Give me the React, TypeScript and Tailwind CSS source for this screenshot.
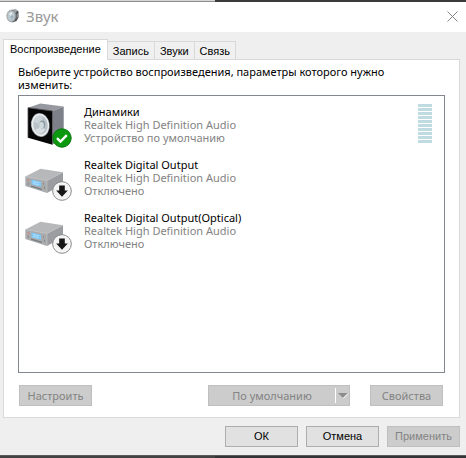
import React, { useState } from 'react';

interface Device {
    name: string;
    driver: string;
    status: string;
    kind: 'speaker' | 'digital';
    active: boolean;
}

const devices: Device[] = [
    { name: 'Динамики', driver: 'Realtek High Definition Audio', status: 'Устройство по умолчанию', kind: 'speaker', active: true },
    { name: 'Realtek Digital Output', driver: 'Realtek High Definition Audio', status: 'Отключено', kind: 'digital', active: false },
    { name: 'Realtek Digital Output(Optical)', driver: 'Realtek High Definition Audio', status: 'Отключено', kind: 'digital', active: false },
];

const tabs = ['Воспроизведение', 'Запись', 'Звуки', 'Связь'];

const SoundIcon: React.FC<React.SVGProps<SVGSVGElement>> = (props) => (
    <svg xmlns="http://www.w3.org/2000/svg" viewBox="0 0 14 14" {...props}>
        <path d="M5 1 10 .5 12.5 2.5v6l-2 3.5-4 1.5z" fill="#4a4d50" />
        <path d="M7 1 10 .5l1.5 1.5L9.5 4z" fill="#a3a8ac" />
        <path d="M10.5 5l1.5-1v4l-1.5 2z" fill="#85898c" />
        <ellipse cx="5.3" cy="7" rx="4.6" ry="6" fill="#a9b1b6" stroke="#85898c" strokeWidth=".8" strokeDasharray="1 1" />
        <ellipse cx="5.1" cy="7" rx="3.4" ry="4.6" fill="#bccad2" />
        <path d="M3 4.5 6.5 3 5 7.5z" fill="#e6edf0" />
        <ellipse cx="6" cy="8" rx="1.4" ry="1.8" fill="#9fb0bb" />
    </svg>
);

const CloseIcon: React.FC<React.SVGProps<SVGSVGElement>> = (props) => (
    <svg xmlns="http://www.w3.org/2000/svg" fill="none" viewBox="0 0 11 11" stroke="currentColor" {...props}>
        <path d="M.5.5l10 10M10.5.5l-10 10" />
    </svg>
);

const SpeakerIcon: React.FC<React.SVGProps<SVGSVGElement>> = (props) => (
    <svg xmlns="http://www.w3.org/2000/svg" viewBox="0 0 48 48" {...props}>
        <path d="M4 7.7 16.3 3.5 39.7 6.5 28.5 11z" fill="#96989f" />
        <path d="M28.5 11 39.7 6.5V35l-11.2 9.7z" fill="#7d8089" />
        <path d="M4 7.7 28.5 11v33.7L4 37.7z" fill="#060607" />
        <path d="M4 37.7V7.7L28.5 11" fill="none" stroke="#4b4d52" strokeWidth=".8" />
        <ellipse cx="16.3" cy="25" rx="9.4" ry="12" transform="rotate(-8 16.3 25)" fill="#8a9094" />
        <ellipse cx="16.3" cy="25" rx="8.8" ry="11.3" transform="rotate(-8 16.3 25)" fill="#eceff0" />
        <ellipse cx="16.5" cy="25" rx="7.2" ry="9.6" transform="rotate(-8 16.5 25)" fill="#b9c3c9" />
        <path d="M10 22c1-5 5-8 8.5-5.5L17.5 25z" fill="#ccd4d9" />
        <path d="M11 30c2 4.5 7 5 10-.5L18 26z" fill="#d8dee1" />
        <ellipse cx="18.3" cy="24.5" rx="3" ry="4" fill="#8d9aa3" />
        <ellipse cx="17.5" cy="25.3" rx="2.4" ry="3.2" fill="#cfd8dd" />
    </svg>
);

const DigitalIcon: React.FC<React.SVGProps<SVGSVGElement>> = (props) => (
    <svg xmlns="http://www.w3.org/2000/svg" viewBox="0 0 48 48" {...props}>
        <path d="M1.3 23.5 16.5 15.8 39 19.2 23 27.5z" fill="#b6b8ba" />
        <path d="M23 27.5 39 19.2V31L23 40z" fill="#9b9da0" />
        <path d="M1.3 23.5 23 27.5V40L1.3 33z" fill="#a9abad" />
        <path d="M1.3 23.5 23 27.5l16-8.3M23 27.5V40" fill="none" stroke="#bfc1c3" strokeWidth=".7" />
        <path d="M7.5 26.5 17 28.7v5L7.5 31.5z" fill="#7fc8f5" />
        <path d="M9 28.5l6 1.5M9 30.5l6 1.5" stroke="#b4e1fb" strokeWidth=".9" />
        <path d="M7 32.5l11 3.2V37L7 33.8z" fill="#77797b" />
        <circle cx="4.3" cy="27" r="1.1" fill="#cf8b8b" />
        <path d="M4.3 29.5V32M19.5 30v1.5M20.5 33.5V36" stroke="#85878a" strokeWidth="1" />
    </svg>
);

const CheckBadge: React.FC<React.SVGProps<SVGSVGElement>> = (props) => (
    <svg xmlns="http://www.w3.org/2000/svg" viewBox="0 0 20 20" {...props}>
        <circle cx="10" cy="10" r="9.2" fill="#0c990f" stroke="#0a780e" strokeWidth="1" />
        <path d="M5 10.2l3.5 3.4 6.3-6.4" fill="none" stroke="#fff" strokeWidth="2.4" />
    </svg>
);

const DownBadge: React.FC<React.SVGProps<SVGSVGElement>> = (props) => (
    <svg xmlns="http://www.w3.org/2000/svg" viewBox="0 0 20 20" {...props}>
        <circle cx="10" cy="10" r="9.3" fill="#fff" stroke="#858585" strokeWidth="1" />
        <circle cx="10" cy="10" r="8" fill="#f3f3f3" />
        <path d="M7.2 4.5h5.6v5h3L10 15.8 4.2 9.5h3z" fill="#161616" />
    </svg>
);

const LevelMeter = () => (
    <div className="flex w-3.5 flex-col gap-px pt-1">
        {Array.from({ length: 10 }, (_, i) => (
            <span key={i} className="h-[3px] bg-[#c0dce2]" />
        ))}
    </div>
);

const DeviceRow: React.FC<{ device: Device }> = ({ device }) => (
    <li className="flex h-[53px] items-start">
        <div className="relative size-12 shrink-0">
            {device.kind === 'speaker' ? <SpeakerIcon className="size-12" /> : <DigitalIcon className="size-12" />}
            {device.active ? (
                <CheckBadge className="absolute right-0 bottom-0 size-5" />
            ) : (
                <DownBadge className="absolute right-0 bottom-0 size-5" />
            )}
        </div>
        <div className="ml-3 flex-1 pt-[5px] leading-[13px] whitespace-nowrap text-[#838383]">
            <p className="text-black">{device.name}</p>
            <p>{device.driver}</p>
            <p>{device.status}</p>
        </div>
        {device.active && <LevelMeter />}
    </li>
);

interface DialogButtonProps extends React.ButtonHTMLAttributes<HTMLButtonElement> {
    className?: string;
}

const DialogButton: React.FC<DialogButtonProps> = ({ className = 'w-[73px]', children, ...props }) => (
    <button
        type="button"
        className={`flex h-[21px] items-center justify-center border border-[#adadad] bg-[#e1e1e1] text-black disabled:border-[#bfbfbf] disabled:bg-[#cccccc] disabled:text-[#838383] ${className}`}
        {...props}
    >
        {children}
    </button>
);

export default function App() {
    const [activeTab, setActiveTab] = useState(0);

    return (
        <div className="w-full bg-[#efefef] font-['Noto_Sans','Liberation_Sans',sans-serif] text-[11px] leading-[13px] text-black">
            {/* Edge of the window behind */}
            <div className="flex h-0.5">
                <div className="w-[215px] border-b border-[#8e8e8e] bg-[#d5d5d5]" />
                <div className="flex-1 bg-[#3c393c]" />
            </div>

            <header className="flex h-[30px] items-center bg-white pr-2 pb-0.5 pl-1.5">
                <SoundIcon className="mr-1.5 size-3.5" />
                <h1 className="flex-1 text-[15px] leading-5 text-[#999999]">Звук</h1>
                <button type="button" aria-label="Закрыть" className="text-[#858585]">
                    <CloseIcon className="size-[11px]" />
                </button>
            </header>

            <main className="pt-[7px] pr-[6px] pl-[3px]">
                <div role="tablist" className="flex items-end font-['Liberation_Sans',sans-serif]">
                    {tabs.map((tab, i) => (
                        <button
                            key={tab}
                            type="button"
                            role="tab"
                            aria-selected={activeTab === i}
                            onClick={() => setActiveTab(i)}
                            className={
                                activeTab === i
                                    ? 'z-10 -mb-px h-[21px] border border-b-0 border-[#d9d9d9] bg-white px-1.5 pb-0.5'
                                    : 'h-[18px] border border-b-0 border-l-0 border-[#d9d9d9] bg-[#f0f0f0] px-[5px] pt-0.5'
                            }
                        >
                            {tab}
                        </button>
                    ))}
                </div>

                <section role="tabpanel" className="border border-[#d9d9d9] bg-white px-3.5 pb-[11px]">
                    <p className="pt-[5px] pb-1">
                        Выберите устройство воспроизведения, параметры которого нужно
                        <br />
                        изменить:
                    </p>
                    <ul className="h-[278px] border border-[#828790] pt-1 pr-3 pl-[5px]">
                        {devices.map((device) => (
                            <DeviceRow key={device.name} device={device} />
                        ))}
                    </ul>
                    <div className="mt-3 flex pr-0.5 pl-px">
                        <DialogButton disabled>Настроить</DialogButton>
                        <DialogButton disabled className="mr-5 ml-auto w-[142px]">
                            <span className="flex-1">По умолчанию</span>
                            <span className="flex h-[15px] w-3.5 items-center border-l border-white">
                                <svg viewBox="0 0 12 7" className="ml-px h-[7px] w-3">
                                    <path d="M1 1h10L6 6z" fill="#8d8d8d" />
                                    <path d="M6 6.5 11 1.5" stroke="#fff" />
                                </svg>
                            </span>
                        </DialogButton>
                        <DialogButton disabled>Свойства</DialogButton>
                    </div>
                </section>
            </main>

            <footer className="flex justify-end gap-2 pt-2 pr-1.5 pb-2 font-['Liberation_Sans',sans-serif]">
                <DialogButton>ОК</DialogButton>
                <DialogButton>Отмена</DialogButton>
                <DialogButton disabled>Применить</DialogButton>
            </footer>
            <div className="flex h-[3px] border-t border-[#5b5b5b] bg-[#333435]">
                <div className="w-[215px] bg-[#434343]" />
            </div>
        </div>
    );
}
